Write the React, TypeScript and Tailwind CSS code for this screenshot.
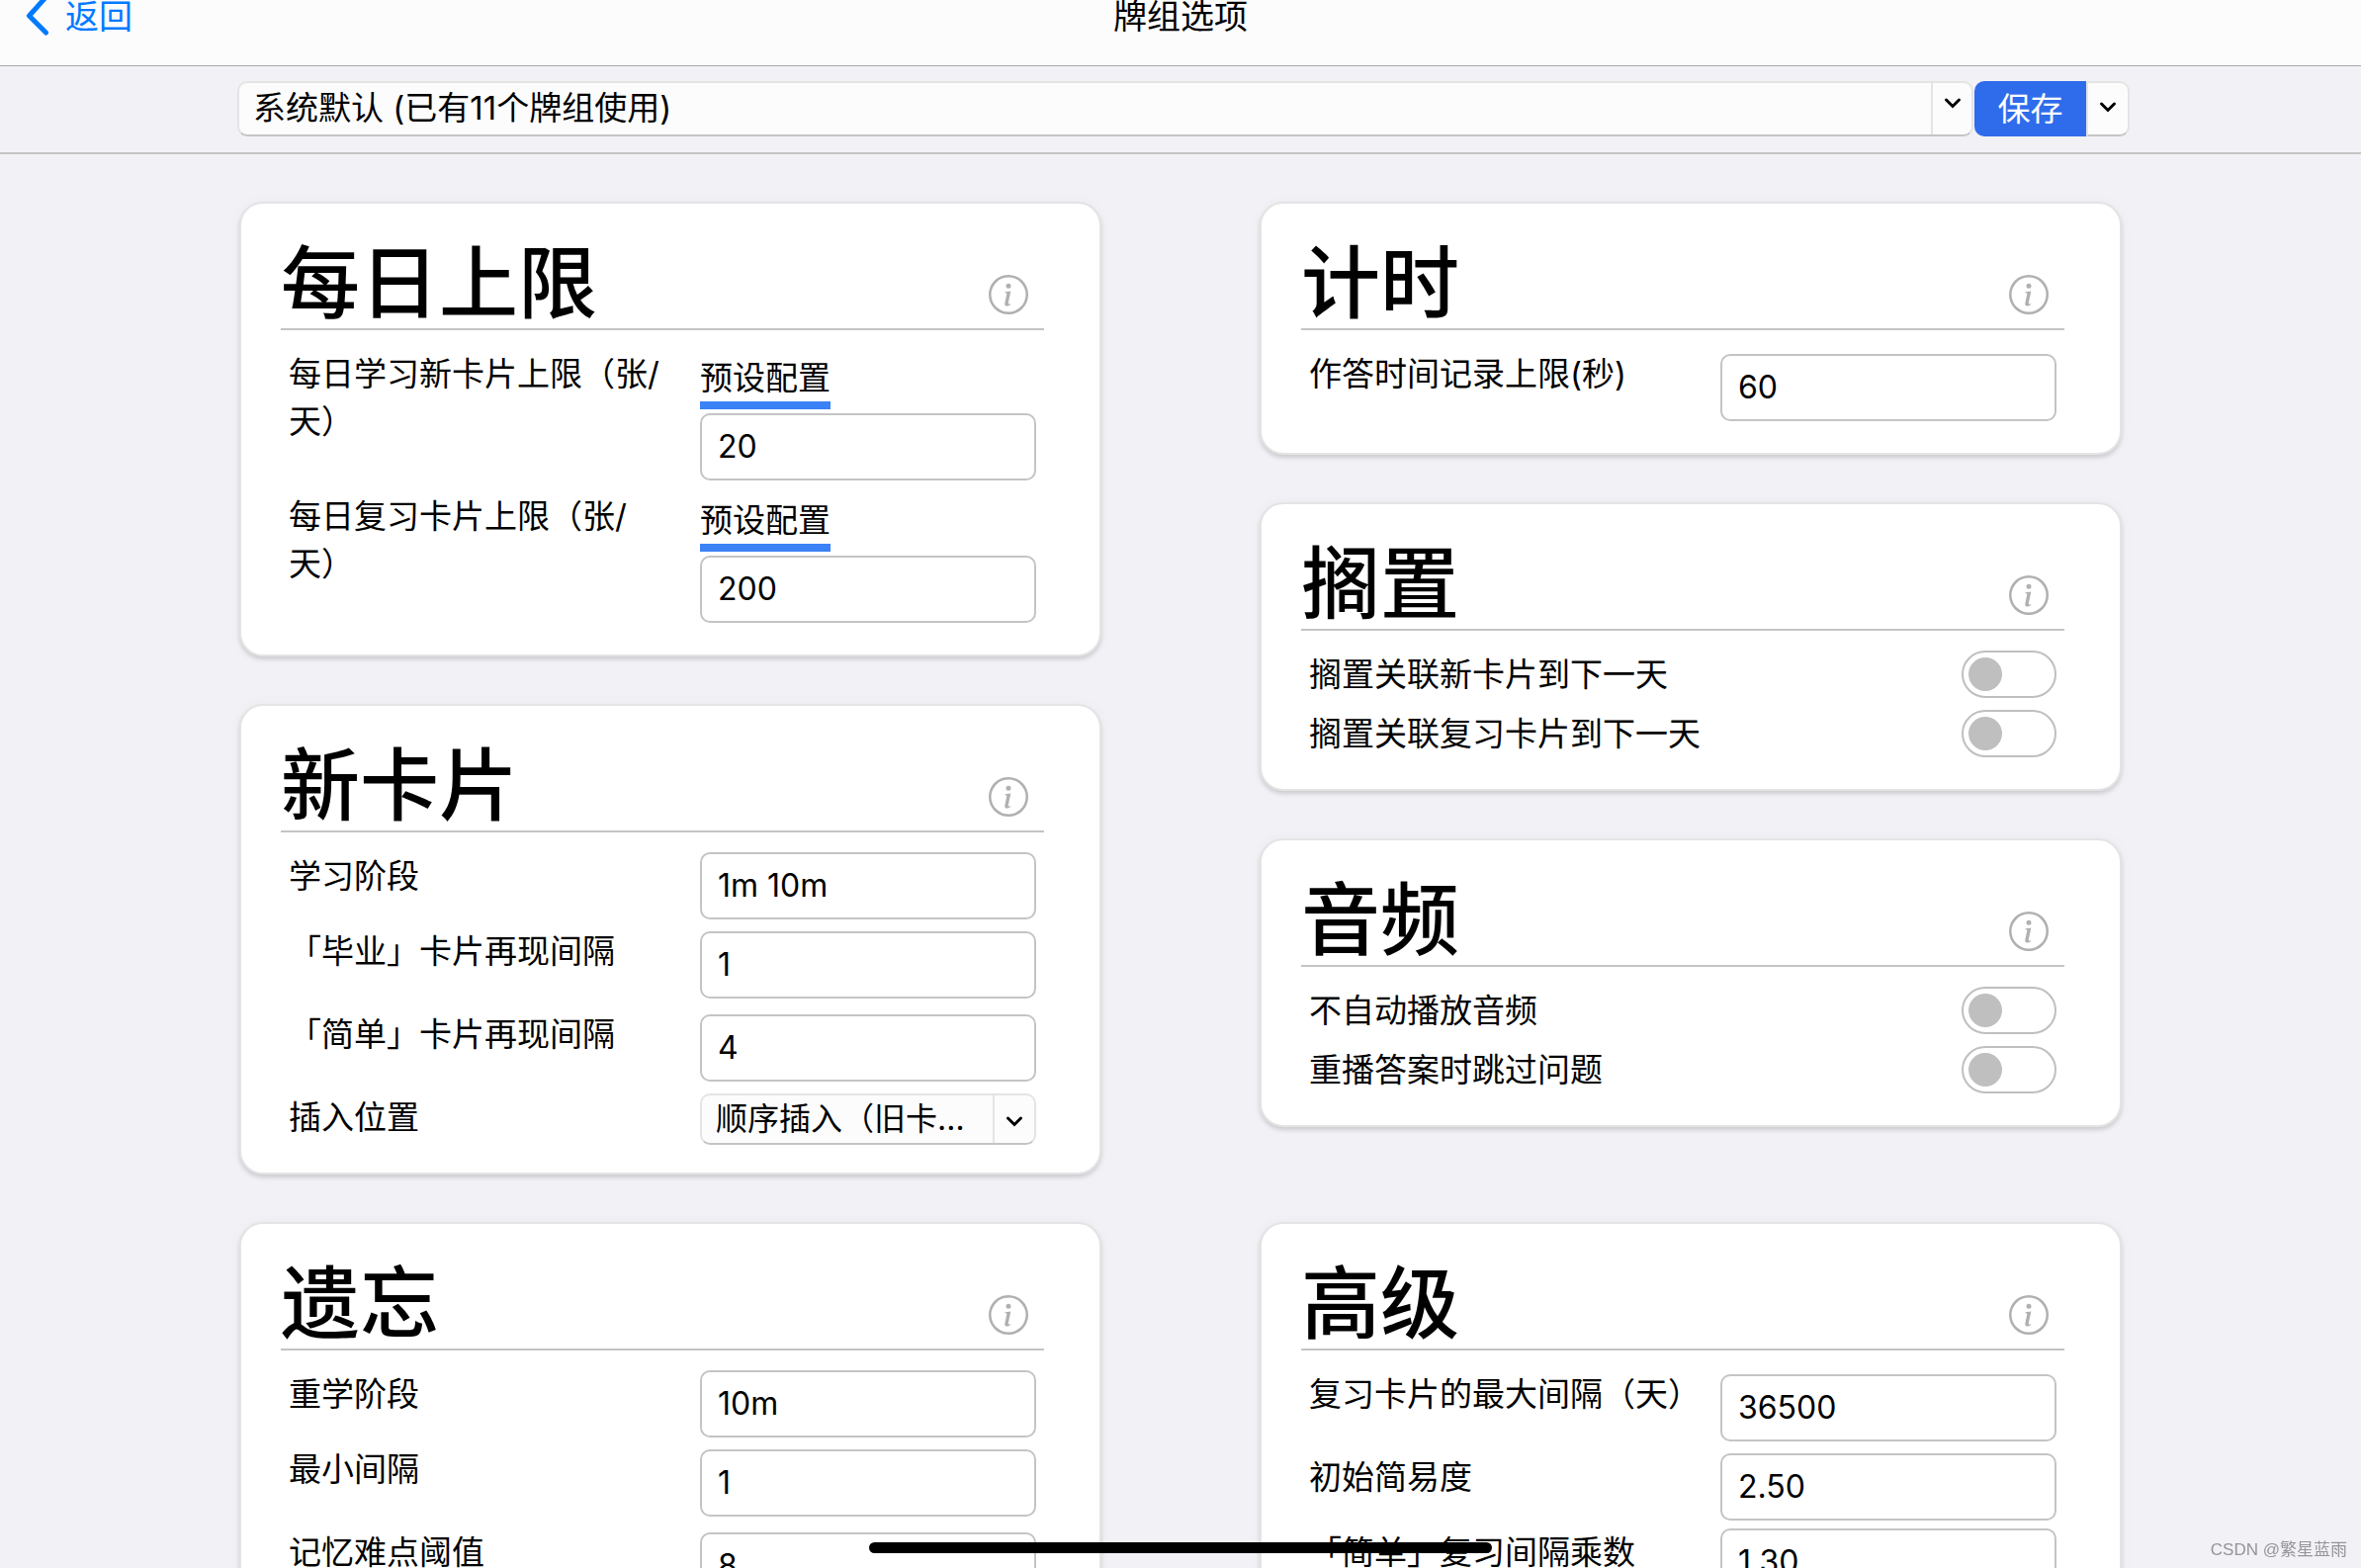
import { useId, useState, type ReactNode } from "react";
import { BsInfoCircle } from "react-icons/bs";

function ChevronDown() {
  return (
    <svg className="h-8 w-8" viewBox="0 0 32 32" fill="none" stroke="#000" strokeWidth="3" aria-hidden="true">
      <path d="M9.5 13l6.5 6.5 6.5-6.5" strokeLinecap="round" strokeLinejoin="miter" />
    </svg>
  );
}

function Card({ title, children }: { title: string; children: ReactNode }) {
  return (
    <section className="rounded-3xl border-2 border-[#e4e4e4] bg-white pt-[34px] pr-14 pb-7 pl-10 shadow-[0_3px_4px_rgba(0,0,0,0.14),0_0_14px_rgba(0,0,0,0.03)]">
      <header className="flex items-end justify-between border-b-2 border-[#c4c4c4] pr-4">
        <h1 className="text-[80px] leading-[92px] font-medium">{title}</h1>
        <button type="button" aria-label={`${title}帮助`} className="mb-3.5 text-[#b0b0b0]">
          <BsInfoCircle className="h-10 w-10" />
        </button>
      </header>
      <div className="flex flex-col gap-2 pt-5 pr-2 pl-2">{children}</div>
    </section>
  );
}

function Row({ label, id, children }: { label: string; id: string; children: ReactNode }) {
  return (
    <div className="grid grid-cols-[minmax(0,1fr)_340px] gap-7">
      <label htmlFor={id} className="leading-12">
        {label}
      </label>
      <div>{children}</div>
    </div>
  );
}

const inputClass =
  "block h-[68px] w-full rounded-[10px] border-2 border-[#c4c4c4] bg-white px-4 pb-0.5 text-[32px] outline-none";

function TextRow({ label, value }: { label: string; value: string }) {
  const id = useId();
  return (
    <Row label={label} id={id}>
      <input id={id} type="text" defaultValue={value} className={inputClass} />
    </Row>
  );
}

function NumberRow({ label, value, preset = false }: { label: string; value: string; preset?: boolean }) {
  const id = useId();
  return (
    <Row label={label} id={id}>
      {preset && (
        <button type="button" className="block border-b-8 border-[#3b82f6] pt-1 leading-12">
          预设配置
        </button>
      )}
      <div className="py-1">
        <input id={id} type="text" inputMode="numeric" defaultValue={value} className={inputClass} />
      </div>
    </Row>
  );
}

function SelectRow({ label, options }: { label: string; options: string[] }) {
  const id = useId();
  return (
    <Row label={label} id={id}>
      <div className="relative">
        <select
          id={id}
          className="block h-[52px] w-full appearance-none overflow-hidden rounded-[10px] border-2 border-[#e4e4e4] border-b-[#c4c4c4] bg-[#fcfcfc] pr-14 pl-3.5 text-[32px] text-ellipsis whitespace-nowrap outline-none"
        >
          {options.map((o) => (
            <option key={o}>{o}</option>
          ))}
        </select>
        <span className="pointer-events-none absolute top-0.5 right-0.5 bottom-0.5 flex w-[42px] items-center justify-center border-l-2 border-[#e4e4e4] pt-1">
          <ChevronDown />
        </span>
      </div>
    </Row>
  );
}

function SwitchRow({ label }: { label: string }) {
  const id = useId();
  const [on, setOn] = useState(false);
  return (
    <div className="flex h-[52px] items-start justify-between">
      <label htmlFor={id} className="leading-12">
        {label}
      </label>
      <input
        id={id}
        type="checkbox"
        role="switch"
        checked={on}
        onChange={(e) => setOn(e.target.checked)}
        className="flex h-12 w-24 appearance-none items-center rounded-full border-2 border-[#bfbfbf] bg-white px-[5px] before:block before:h-[34px] before:w-[34px] before:rounded-full before:bg-[#bfbfbf] before:content-[''] checked:justify-end checked:before:bg-[#2f6ceb]"
      />
    </div>
  );
}

export default function App() {
  return (
    <div className="flex h-screen flex-col overflow-hidden bg-[#f2f1f6] font-[Inter,'Noto_Sans_CJK_SC',sans-serif] text-[33px] text-black">
      <nav className="grid shrink-0 grid-cols-[1fr_auto_1fr] border-b border-[#a9a9a9] bg-[#fcfcfd] pb-8 text-[34px] leading-[34px]">
        <a href="#back" className="flex items-center gap-3.5 justify-self-start pl-6 text-[#007aff]">
          <svg className="h-[34px] w-7 overflow-visible" viewBox="0 0 28 34" fill="none" aria-hidden="true">
            <path d="M22.5 -3L5.5 16L22.5 33" stroke="currentColor" strokeWidth="5" strokeLinecap="round" strokeLinejoin="round" />
          </svg>
          返回
        </a>
        <h2>牌组选项</h2>
      </nav>

      <div className="flex shrink-0 border-b-2 border-[#c4c4c4] pt-[15px] pr-[234px] pb-4 pl-60">
        <div className="relative mr-px min-w-0 flex-1">
          <select
            aria-label="选项组"
            className="block h-14 w-full appearance-none rounded-[10px] border-2 border-[#e4e4e4] border-b-[#c4c4c4] bg-[#fcfcfc] pr-14 pl-3.5 outline-none"
          >
            <option>系统默认 (已有11个牌组使用)</option>
          </select>
          <span className="pointer-events-none absolute top-0.5 right-0.5 bottom-0.5 flex w-[41px] items-start justify-center border-l-2 border-[#e4e4e4] pt-1">
            <ChevronDown />
          </span>
        </div>
        <button type="button" className="h-14 w-[113px] rounded-l-[10px] bg-[#2f6ceb] pt-0.5 text-white">
          保存
        </button>
        <button
          type="button"
          aria-label="更多操作"
          className="flex h-14 w-11 items-center justify-center rounded-r-[10px] border-2 border-[#e4e4e4] border-b-[#c4c4c4] bg-[#fcfcfc] pb-1"
        >
          <ChevronDown />
        </button>
      </div>

      <main className="grid min-h-0 flex-1 grid-cols-2 content-start items-start gap-x-40 gap-y-12 px-[242px] pt-12">
        <div className="flex flex-col gap-12">
          <Card title="每日上限">
            <NumberRow label="每日学习新卡片上限（张/天）" value="20" preset />
            <NumberRow label="每日复习卡片上限（张/天）" value="200" preset />
          </Card>
          <Card title="新卡片">
            <TextRow label="学习阶段" value="1m 10m" />
            <NumberRow label="「毕业」卡片再现间隔" value="1" />
            <NumberRow label="「简单」卡片再现间隔" value="4" />
            <SelectRow label="插入位置" options={["顺序插入（旧卡片优先）", "随机插入"]} />
          </Card>
        </div>
        <div className="flex flex-col gap-12">
          <Card title="计时">
            <NumberRow label="作答时间记录上限(秒)" value="60" />
          </Card>
          <Card title="搁置">
            <SwitchRow label="搁置关联新卡片到下一天" />
            <SwitchRow label="搁置关联复习卡片到下一天" />
          </Card>
          <Card title="音频">
            <SwitchRow label="不自动播放音频" />
            <SwitchRow label="重播答案时跳过问题" />
          </Card>
        </div>
        <Card title="遗忘">
          <TextRow label="重学阶段" value="10m" />
          <NumberRow label="最小间隔" value="1" />
          <NumberRow label="记忆难点阈值" value="8" />
        </Card>
        <Card title="高级">
          <NumberRow label="复习卡片的最大间隔（天）" value="36500" />
          <TextRow label="初始简易度" value="2.50" />
          <TextRow label="「简单」复习间隔乘数" value="1.30" />
        </Card>
      </main>

      <div className="fixed bottom-[15px] left-1/2 h-[11px] w-[630px] -translate-x-1/2 rounded-full bg-black" />
      <p className="fixed right-3.5 bottom-1.5 font-['Liberation_Sans','Noto_Sans_CJK_SC',sans-serif] text-[17px] leading-6 text-[#94949a]">
        CSDN @繁星蓝雨
      </p>
    </div>
  );
}
